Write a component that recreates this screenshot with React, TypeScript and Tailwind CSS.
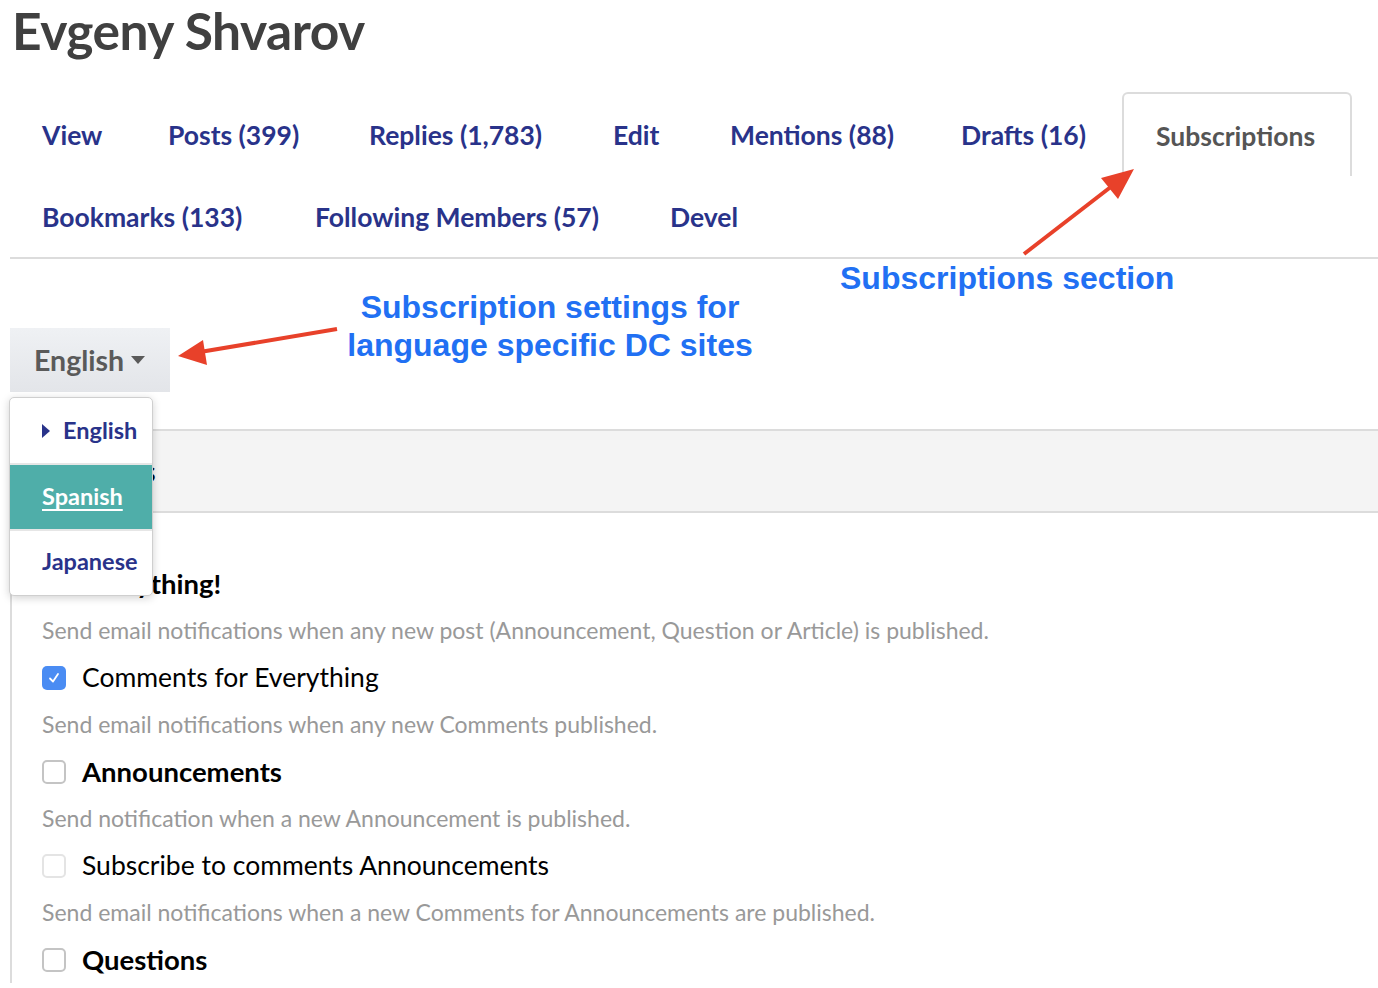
import React from "react";

const navy = "text-[#29338a]";

function Tab({ label, w, active }: { label: string; w: string; active?: boolean }) {
  return (
    <div
      className={
        "shrink-0 flex items-center pl-[32px] pt-[3px] text-[26.5px] font-bold " +
        w +
        (active
          ? " border-2 border-b-0 border-[#dcdcdc] rounded-t-[6px] text-[#555] bg-white"
          : " " + navy)
      }
    >
      {label}
    </div>
  );
}

function Box({ checked, light }: { checked?: boolean; light?: boolean }) {
  if (checked)
    return (
      <div className="shrink-0 w-[24px] h-[24px] rounded-[5px] bg-[#4a8cf3] flex items-center justify-center">
        <svg width="14" height="14" viewBox="0 0 14 14">
          <path d="M3 7.5 L6 10.5 L11 3" stroke="white" strokeWidth="1.8" fill="none" strokeLinecap="round" strokeLinejoin="round" />
        </svg>
      </div>
    );
  return (
    <div
      className={
        "shrink-0 w-[24px] h-[24px] rounded-[5px] border-2 bg-white " +
        (light ? "border-[#e4e4e4]" : "border-[#c4c4c4]")
      }
    />
  );
}

function Desc({ children }: { children: React.ReactNode }) {
  return <div className="h-[47px] flex items-center text-[23px] text-[#999]">{children}</div>;
}

function Check({ label, bold, checked, light }: { label: string; bold?: boolean; checked?: boolean; light?: boolean }) {
  return (
    <div
      className={
        "h-[47px] flex items-center gap-[16px] text-black " +
        (bold ? "text-[27.5px] font-bold" : "text-[26.5px]")
      }
    >
      <Box checked={checked} light={light} />
      {label}
    </div>
  );
}

export default function App() {
  return (
    <div className="relative w-[1378px] h-[988px] overflow-hidden bg-white font-['Lato',sans-serif]">
      <h1 className="h-[60px] pl-[12px] text-[51.5px] leading-[60px] font-bold text-[#404040] tracking-[-0.5px]">
        Evgeny Shvarov
      </h1>

      <div className="mt-[32px] ml-[10px] border-b-2 border-[#dcdcdc]">
        <div className="flex h-[84px]">
          <Tab label="View" w="w-[126px]" />
          <Tab label="Posts (399)" w="w-[201px]" />
          <Tab label="Replies (1,783)" w="w-[244px]" />
          <Tab label="Edit" w="w-[117px]" />
          <Tab label="Mentions (88)" w="w-[231px]" />
          <Tab label="Drafts (16)" w="w-[193px]" />
          <Tab label="Subscriptions" w="w-[230px]" active />
        </div>
        <div className="flex h-[81px]">
          <Tab label="Bookmarks (133)" w="w-[273px]" />
          <Tab label="Following Members (57)" w="w-[355px]" />
          <Tab label="Devel" w="w-[120px]" />
        </div>
      </div>

      <div className="mt-[69px] ml-[10px] w-[160px] h-[64px] bg-gradient-to-b from-[#eff1f4] to-[#e3e5e9] flex items-center pl-[24px] gap-[7px] text-[28.5px] font-bold text-[#5a5a5a]">
        English
        <svg width="14" height="8" viewBox="0 0 14 8">
          <path d="M0 0 L14 0 L7 8 Z" fill="#5a5a5a" />
        </svg>
      </div>

      <div className="mt-[37px] ml-[10px] h-[84px] border-y-2 border-[#dcdcdc] bg-[#f4f4f4] flex items-center pl-[32px] text-[28px] font-bold text-black tracking-[1.8px]">
        Settings
      </div>

      <div className="ml-[10px] border-l-2 border-[#dcdcdc] pl-[30px] pt-[47px]">
        <Check label="Everything!" bold />
        <Desc>Send email notifications when any new post (Announcement, Question or Article) is published.</Desc>
        <Check label="Comments for Everything" checked />
        <Desc>Send email notifications when any new Comments published.</Desc>
        <Check label="Announcements" bold />
        <Desc>Send notification when a new Announcement is published.</Desc>
        <Check label="Subscribe to comments Announcements" light />
        <Desc>Send email notifications when a new Comments for Announcements are published.</Desc>
        <Check label="Questions" bold />
      </div>

      {/* dropdown menu */}
      <div className="absolute left-[9px] top-[397px] w-[144px] h-[199px] bg-white border border-[#cfcfcf] rounded-[5px] shadow-[0_2px_8px_rgba(0,0,0,0.18)] overflow-hidden flex flex-col text-[23.5px] font-bold">
        <div className={"h-[65px] flex items-center pl-[32px] gap-[13px] " + navy}>
          <svg width="8" height="14" viewBox="0 0 8 14">
            <path d="M0 0 L8 7 L0 14 Z" fill="#29338a" />
          </svg>
          English
        </div>
        <div className="h-[2px] bg-[#e6e6e6]" />
        <div className="h-[64px] flex items-center pl-[32px] bg-[#4faea9] text-white underline underline-offset-[4px]">
          Spanish
        </div>
        <div className="h-[2px] bg-[#e6e6e6]" />
        <div className={"flex-1 flex items-center pl-[32px] pb-[2px] " + navy}>Japanese</div>
      </div>

      {/* annotations */}
      <svg className="absolute left-0 top-0" width="1378" height="988" viewBox="0 0 1378 988">
        <line x1="1024" y1="254" x2="1112" y2="186" stroke="#e8412a" strokeWidth="4" />
        <path d="M1134 169 L1101 178 L1118 199 Z" fill="#e8412a" />
        <line x1="337" y1="329" x2="200" y2="352" stroke="#e8412a" strokeWidth="4" />
        <path d="M178 356 L203 340 L207 365 Z" fill="#e8412a" />
      </svg>
      <div className="absolute left-[840px] top-[258px] text-[32px] leading-[40px] font-bold text-[#2170f3] font-['Liberation_Sans',Arial,sans-serif]">
        Subscriptions section
      </div>
      <div className="absolute left-[330px] top-[288px] w-[440px] text-center text-[32px] leading-[38px] font-bold text-[#2170f3] font-['Liberation_Sans',Arial,sans-serif]">
        Subscription settings for
        <br />
        language specific DC sites
      </div>
    </div>
  );
}
